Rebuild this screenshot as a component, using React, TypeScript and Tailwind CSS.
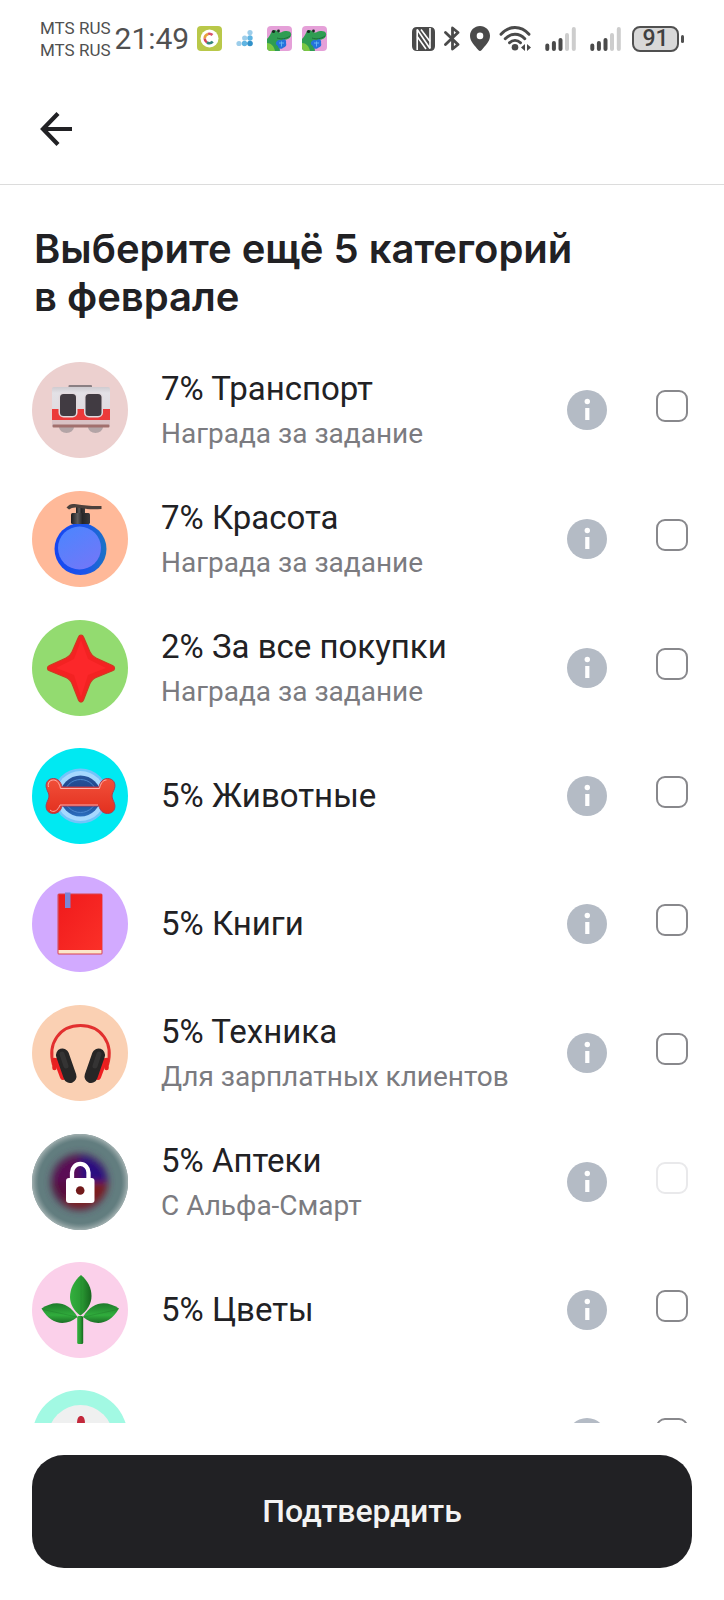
import type { ReactNode } from "react";

type Category = {
  id: string;
  title?: string;
  note?: string;
  locked?: boolean;
  icon: ReactNode;
};

function Disc({ color, children }: { color: string; children: ReactNode }) {
  return (
    <svg viewBox="0 0 96 96" className="size-24 shrink-0" aria-hidden="true">
      <circle cx="48" cy="48" r="48" fill={color} />
      {children}
    </svg>
  );
}

const Train = (
  <Disc color="#ecd0cf">
    <defs>
      <linearGradient id="tr" x1="0" y1="0" x2="0" y2="1">
        <stop offset="0" stopColor="#cfcbd0" />
        <stop offset=".15" stopColor="#e3e1e6" />
        <stop offset="1" stopColor="#dcd6da" />
      </linearGradient>
    </defs>
    <rect x="36.5" y="23" width="23.5" height="3" rx="1" fill="#8b7f83" />
    <path d="M27 65h15a7.5 6 0 0 1-15 0zM56 65h15a7.5 6 0 0 1-15 0z" fill="#b3a4a6" />
    <rect x="20" y="25" width="58" height="40" rx="2" fill="url(#tr)" />
    <rect x="20" y="47" width="58" height="11" fill="#ec3a3a" />
    <rect x="20" y="58" width="58" height="5" fill="#d9c2c5" />
    <rect x="20.5" y="62.5" width="57" height="3" rx="1" fill="#a2706e" />
    <rect x="26.5" y="30.5" width="19" height="25" rx="5" fill="#e2dade" />
    <rect x="52" y="30.5" width="19" height="25" rx="5" fill="#e2dade" />
    <rect x="28" y="32" width="16" height="22" rx="3.5" fill="#413b42" />
    <rect x="53.5" y="32" width="16" height="22" rx="3.5" fill="#413b42" />
  </Disc>
);

const Bottle = (
  <Disc color="#ffb999">
    <defs>
      <linearGradient id="bo" x1="0" y1="0" x2="1" y2="0">
        <stop offset="0" stopColor="#1546f2" />
        <stop offset=".6" stopColor="#1c55ea" />
        <stop offset="1" stopColor="#1b74c4" />
      </linearGradient>
      <linearGradient id="bi" x1="0" y1="0" x2=".6" y2="1">
        <stop offset="0" stopColor="#4a86ff" />
        <stop offset="1" stopColor="#6f78f8" />
      </linearGradient>
      <linearGradient id="bc" x1="0" y1="0" x2="1" y2="0">
        <stop offset="0" stopColor="#1c1c1e" />
        <stop offset=".35" stopColor="#5d5b5c" />
        <stop offset=".6" stopColor="#262627" />
        <stop offset="1" stopColor="#3b3a3b" />
      </linearGradient>
    </defs>
    <path d="M41 31h16v5H41z" fill="#2a59d2" />
    <circle cx="48.5" cy="58" r="26" fill="url(#bo)" />
    <circle cx="47.5" cy="57" r="21.5" fill="url(#bi)" />
    <rect x="44" y="15" width="9" height="9" fill="url(#bc)" />
    <rect x="39" y="22" width="19" height="11" rx="1.5" fill="url(#bc)" />
    <path d="M34.500 16.500c3-4 6-4 10-3.200 8 1.400 17 2 25 1.700v3c-9 .8-17 0-24-1.200-4-.7-6 .5-8.500 1.700z" fill="#4b403c" />
  </Disc>
);

const Star = (
  <Disc color="#93db70">
    <path
      d="M46.500 17c1-2.700 4-2.700 5 0l6.500 15c1.300 3 3 4.700 6 6l16.500 7.500c2.700 1.200 2.700 4.200 0 5.300L64 57.500c-3.500 1.500-5 3.500-6.300 6.500l-6.200 16c-1 2.700-4 2.700-5 0l-6.300-16c-1.300-3-2.700-5-6.200-6.500l-16.500-6.700c-2.700-1.100-2.700-4.100 0-5.300L34 38c3-1.300 4.700-3 6-6z"
      fill="#f32222"
      stroke="#cf3a20"
      strokeWidth="1.2"
    />
    <path d="M49 20l7 19 18 9-18 7-7 22-7-22-18-7 18-9z" fill="#ff2a2e" opacity=".7" />
  </Disc>
);

const Bone = (
  <Disc color="#00e9f2">
    <defs>
      <linearGradient id="bn" x1="0" y1="0" x2="0" y2="1">
        <stop offset="0" stopColor="#27579f" />
        <stop offset=".5" stopColor="#1a3c80" />
        <stop offset="1" stopColor="#2b6fc0" />
      </linearGradient>
      <linearGradient id="bb" x1="0" y1="0" x2="0" y2="1">
        <stop offset="0" stopColor="#f1503a" />
        <stop offset="1" stopColor="#e3301f" />
      </linearGradient>
    </defs>
    <circle cx="48.5" cy="48" r="27.5" fill="#72c4fa" />
    <circle cx="48.5" cy="48" r="25" fill="#a5d8ff" />
    <circle cx="48.5" cy="48" r="20.5" fill="url(#bn)" />
    <circle cx="48.5" cy="48" r="16.5" fill="none" stroke="#4a86cf" strokeWidth="1" />
    <path
      d="M30 39h37c1-5 4-8.500 8.500-8.500 6 0 8.500 5 7 10-.8 2.600-2.500 5-2.500 7.500s1.700 5 2.500 7.500c1.500 5-1 10-7 10-4.500 0-7.500-3-8.500-7.500H30c-1 4.500-4 7.500-8.500 7.500-6 0-8.500-5-7-10 .8-2.500 2.500-5 2.500-7.500s-1.700-4.900-2.500-7.500c-1.500-5 1-10 7-10 4.500 0 7.500 3.500 8.500 8.500z"
      fill="url(#bb)"
      stroke="#a93a55"
      strokeWidth="1"
    />
    <path d="M16.500 39c-1-4 1-7 5-7s6 4 7 8.500h39c1-4.500 3-8.500 7-8.500" fill="none" stroke="#ffb0a8" strokeWidth="1" />
    <path d="M18 62c3 3 8 1 10-5h38" fill="none" stroke="#f9a8a8" strokeWidth="1" />
  </Disc>
);

const Book = (
  <Disc color="#d2aaff">
    <defs>
      <linearGradient id="bk" x1="0" y1="0" x2="1" y2="1">
        <stop offset="0" stopColor="#f01a1c" />
        <stop offset="1" stopColor="#fb3028" />
      </linearGradient>
    </defs>
    <rect x="25.5" y="17.5" width="45" height="61" rx="1.5" fill="#d9434f" />
    <rect x="27" y="18.5" width="43" height="56" fill="url(#bk)" />
    <rect x="26.5" y="74" width="43" height="3.5" fill="#fde6c8" />
    <rect x="33" y="16.5" width="5.5" height="15.5" fill="#7d86d6" />
  </Disc>
);

const Headphones = (
  <Disc color="#fad0b3">
    <path d="M25 56l6 16M72 56l-6 16" stroke="#ee1f22" strokeWidth="6" strokeLinecap="round" />
    <path d="M21.500 60C15 38 28 20.500 48.500 20.500S82 38 75.500 60" fill="none" stroke="#e2302f" strokeWidth="3" />
    <path d="M22.500 55v8M74.500 55v8" stroke="#e8201f" strokeWidth="4.5" strokeLinecap="round" />
    <path d="M30.500 50l7.500 21.500M66.500 50L59 71.500" stroke="#272626" strokeWidth="13" strokeLinecap="round" />
    <path d="M30 49l4 12M67 49l-4 12" stroke="#353434" strokeWidth="5" strokeLinecap="round" />
  </Disc>
);

const Lock = (
  <Disc color="#627d7f">
    <defs>
      <radialGradient id="lr">
        <stop offset=".86" stopColor="#8a9c9d" stopOpacity="0" />
        <stop offset="1" stopColor="#a3b1b1" />
      </radialGradient>
      <filter id="lb" x="-30%" y="-30%" width="160%" height="160%">
        <feGaussianBlur stdDeviation="3.5" />
      </filter>
    </defs>
    <circle cx="48" cy="48" r="48" fill="url(#lr)" />
    <g filter="url(#lb)">
      <circle cx="47.5" cy="48" r="29" fill="#4f3452" />
      <path d="M48 50H21a27 27 0 0 1 27-28z" fill="#5a0b55" />
      <path d="M48 50V22a27 27 0 0 1 27 26z" fill="#2b1180" />
      <path d="M48 48h27a27 27 0 0 1-45 19z" fill="#7c1f1c" />
      <path d="M48 48L32 68a27 27 0 0 1-11-20z" fill="#59103f" />
    </g>
    <path d="M40 46v-7.500a8.200 8.500 0 0 1 16.500 0V46" fill="none" stroke="#fff" strokeWidth="4.3" />
    <rect x="34" y="44" width="28.5" height="25" rx="3" fill="#fff" />
    <circle cx="48.2" cy="56.5" r="4.3" fill="#721a1b" />
  </Disc>
);

const Plant = (
  <Disc color="#fbd0ea">
    <defs>
      <linearGradient id="pl" x1="0" y1="0" x2="1" y2="0">
        <stop offset="0" stopColor="#33b03e" />
        <stop offset=".5" stopColor="#2b9c34" />
        <stop offset="1" stopColor="#17661f" />
      </linearGradient>
      <linearGradient id="pm" x1="0" y1="0" x2="0" y2="1">
        <stop offset="0" stopColor="#1f7a2c" />
        <stop offset=".6" stopColor="#30ad3c" />
        <stop offset="1" stopColor="#1c6f26" />
      </linearGradient>
    </defs>
    <rect x="45.2" y="54" width="6" height="28" rx="1.5" fill="url(#pl)" />
    <path d="M49 13c-7 6-11 14-11 22 0 7 4 14 10.300 18.500C55 49 59.500 42 59.500 34 59.500 26 56 19 49 13z" fill="url(#pl)" />
    <path d="M9.500 46.500c12-8 26-8 36 8.500-11 9-26 9-36-8.500z" fill="url(#pm)" />
    <path d="M87 46.500c-12-8-26-8-36 8.500 11 9 26 9 36-8.500z" fill="url(#pm)" />
    <path d="M49 15v38M11 47.500l34 7.500M85.500 47.500L51.500 55" stroke="#1e7429" strokeWidth=".6" opacity=".6" />
  </Disc>
);

const Dial = (
  <Disc color="#a2f9e3">
    <circle cx="48.5" cy="47.5" r="32.5" fill="#eff0f0" />
    <path d="M49 26c2.800 0 4 3 4 8v14h-8V34c0-5 1.200-8 4-8z" fill="#c3283b" />
  </Disc>
);

const categories: Category[] = [
  { id: "transport", title: "7% Транспорт", note: "Награда за задание", icon: Train },
  { id: "beauty", title: "7% Красота", note: "Награда за задание", icon: Bottle },
  { id: "all", title: "2% За все покупки", note: "Награда за задание", icon: Star },
  { id: "pets", title: "5% Животные", icon: Bone },
  { id: "books", title: "5% Книги", icon: Book },
  { id: "tech", title: "5% Техника", note: "Для зарплатных клиентов", icon: Headphones },
  { id: "pharmacy", title: "5% Аптеки", note: "С Альфа-Смарт", locked: true, icon: Lock },
  { id: "flowers", title: "5% Цветы", icon: Plant },
  { id: "more", icon: Dial },
];

function CategoryRow({ item }: { item: Category }) {
  return (
    <li className="flex items-center py-4">
      {item.icon}
      <label htmlFor={item.id} className="ml-[33px] flex min-w-0 flex-1 flex-col">
        <span className={item.note ? "pt-[6px] text-[33px] leading-[44px]" : "text-[33px] leading-[44px]"}>
          {item.title}
        </span>
        {item.note && <span className="pb-px text-[28px] leading-[46px] text-[#7b7b80]">{item.note}</span>}
      </label>
      <button type="button" aria-label="Информация" className="size-10 shrink-0">
        <svg viewBox="0 0 40 40" className="size-10">
          <circle cx="20" cy="20" r="20" fill="#b4bbc5" />
          <circle cx="20.3" cy="11.5" r="2.7" fill="#fff" />
          <path d="M18.200 18h4.200v12h-4.200z" fill="#fff" />
        </svg>
      </button>
      <input
        id={item.id}
        type="checkbox"
        disabled={item.locked}
        className="mr-1 mb-2 ml-[49px] size-8 shrink-0 appearance-none rounded-[9px] border-2 border-[#88888c] bg-white checked:bg-[#212124] disabled:border-[#e9e9eb]"
      />
    </li>
  );
}

function Croc() {
  return (
    <svg viewBox="0 0 25 25" className="w-[25px]" aria-hidden="true">
      <defs>
        <clipPath id="cr">
          <rect width="25" height="25" rx="4" />
        </clipPath>
      </defs>
      <g clipPath="url(#cr)">
        <rect width="25" height="25" fill="#e5a0d8" />
        <path d="M0 13c2-2 3-4 4-6 1-3 4-4 6-2 1 1 2 1.500 4 1.500 4-2 9-2 10 1 1 4-3 6-7 6.500l-5 1.500 1 10H0z" fill="#2f9d52" />
        <path d="M0 17c4 0 7 3 8 8H0z" fill="#7cc843" />
        <path d="M10 12c4 1.500 9 1 13-2" stroke="#1f6d3c" strokeWidth="1" fill="none" />
        <circle cx="6.5" cy="5.5" r="1.6" fill="#182a20" />
        <circle cx="11.5" cy="5" r="1.4" fill="#182a20" />
        <path d="M10 15c2-2 4 0 5-1 2-2 5 0 4 3 1 3-1 4-3 5-3 2-5 0-5-2-2-1-3-3-1-5z" fill="#2472dc" />
        <path d="M12 17h5M14.500 15.500v5" stroke="#63b4f2" strokeWidth="1" fill="none" />
      </g>
    </svg>
  );
}

function Signal() {
  return (
    <svg viewBox="0 0 31 25" className="ml-[5px] w-[31px]" aria-hidden="true">
      <g strokeWidth="4" strokeLinecap="round" stroke="#4a4a4a">
        <path d="M2.300 19.500V23M8.900 17v6M15.500 14v9" />
        <path d="M22 9v14M28.800 3v20" stroke="#cdcdcd" />
      </g>
    </svg>
  );
}

function StatusBar() {
  return (
    <div className="flex h-[77px] shrink-0 items-center justify-between pr-10 pl-10 text-[#505050]">
      <div className="flex items-center">
        <div className="text-[17px] leading-[22px]">
          <p>MTS RUS</p>
          <p>MTS RUS</p>
        </div>
        <span className="ml-1 text-[30px] leading-[40px]">21:49</span>
        <div className="ml-2 flex items-center gap-[10px]">
          <svg viewBox="0 0 25 25" className="w-[25px]" aria-hidden="true">
            <rect width="25" height="25" rx="4" fill="#b9c849" />
            <circle cx="12.5" cy="12.5" r="9" fill="#fff" />
            <g fill="none" strokeWidth="2.6">
              <path d="M15.500 9A4.800 4.800 0 0 0 11 7.900" stroke="#d9536a" />
              <path d="M11 7.900a4.800 4.800 0 0 0-3.300 4.600" stroke="#e8a13c" />
              <path d="M7.700 12.500a4.800 4.800 0 0 0 2.300 4" stroke="#d34559" />
              <path d="M10 16.500a4.800 4.800 0 0 0 5.800-.8" stroke="#35857a" />
            </g>
          </svg>
          <svg viewBox="0 0 25 25" className="w-[25px]" aria-hidden="true">
            <g fill="#9ccdea">
              <circle cx="18" cy="6.5" r="2.6" />
              <circle cx="12.7" cy="12" r="2.6" />
              <circle cx="7" cy="17.5" r="2.6" />
            </g>
            <g fill="#5fb4e2">
              <circle cx="18" cy="12" r="2.7" />
              <circle cx="12.5" cy="17.5" r="2.7" />
            </g>
            <circle cx="18" cy="17.5" r="2.8" fill="#3191c9" />
          </svg>
          <Croc />
          <Croc />
        </div>
      </div>
      <div className="flex items-center gap-[9px]">
        <svg viewBox="0 0 23 24" className="w-[23px]" aria-hidden="true">
          <path d="M5 0h13q5 0 5 5v14q0 5-5 5H5q-5 0-5-5V5q0-5 5-5z" fill="#4a4a4a" />
          <path d="M5.200 2.500v20.500M18 1v20.500" stroke="#fff" strokeWidth="1.6" />
          <path d="M5.200 2.500L18 21.500M9 2.500l9 12M5.200 9.500L14 22" stroke="#fff" strokeWidth="1.6" fill="none" />
        </svg>
        <svg viewBox="0 0 17 25" className="w-[17px]" aria-hidden="true">
          <path d="M1.500 6.500l12.500 12-5.500 4.500V2L14 6.500l-12.500 12" fill="none" stroke="#4a4a4a" strokeWidth="2.8" strokeLinejoin="round" strokeLinecap="round" />
        </svg>
        <svg viewBox="0 0 20 25" className="w-[20px]" aria-hidden="true">
          <path d="M10 0c5.500 0 10 4.300 10 9.800 0 6-5 10-8.300 14.200q-1.700 2-3.400 0C5 19.800 0 15.800 0 9.800 0 4.300 4.500 0 10 0zm0 6.600a3.300 3.300 0 1 0 0 6.600 3.300 3.300 0 0 0 0-6.600z" fill="#4a4a4a" />
        </svg>
        <svg viewBox="0 0 32 25" className="w-[32px]" aria-hidden="true">
          <g fill="none" stroke="#4a4a4a" strokeWidth="2.9" strokeLinecap="round">
            <path d="M2 8.300C10-.8 22-.8 30 8.300" />
            <path d="M6.200 12.800c5.500-6 14.100-6 19.600 0" />
            <path d="M10.500 16.800c3.200-3.200 7.800-3.200 11 0" />
          </g>
          <circle cx="16" cy="21.3" r="3.3" fill="#4a4a4a" />
          <path d="M22 21.500l4-3.500v7zM32 21.500L28 18v7z" fill="#4a4a4a" />
        </svg>
        <Signal />
        <Signal />
        <div className="ml-[2px] flex items-center gap-[2px]">
          <span className="flex h-[26px] w-[47px] items-center justify-center rounded-lg border-2 border-[#505050] bg-[#d8d8d8] text-[23px] leading-[22px] font-medium text-[#404040]">
            91
          </span>
          <span className="h-2 w-[3px] rounded-sm bg-[#505050]" />
        </div>
      </div>
    </div>
  );
}

export default function App() {
  return (
    <div className="flex h-screen flex-col bg-white font-[Roboto,'Noto_Sans',sans-serif] text-[#212124]">
      <StatusBar />
      <header className="flex h-[108px] shrink-0 items-center border-b border-[#dcdcdc] px-8">
        <button type="button" aria-label="Назад" className="-mt-1 flex size-12 items-center justify-center">
          <svg viewBox="0 0 48 48" className="size-12" fill="none" stroke="#212124" strokeWidth="4.2">
            <path d="M26 8.500L11 24l15 15.500M11 24h29" />
          </svg>
        </button>
      </header>
      <main className="min-h-0 flex-1 overflow-y-auto px-8 pt-10 [scrollbar-width:none]">
        <h1 className="mb-6 ml-[2px] font-[Inter,sans-serif] text-[40px] leading-[48px] font-semibold">
          Выберите ещё 5 категорий
          <br />в феврале
        </h1>
        <ul>
          {categories.map((item) => (
            <CategoryRow key={item.id} item={item} />
          ))}
        </ul>
      </main>
      <footer className="shrink-0 p-8">
        <button type="button" className="w-full rounded-[32px] bg-[#212124] py-8 text-[32px] leading-[49px] font-medium text-[#f3f3f3]">
          Подтвердить
        </button>
      </footer>
    </div>
  );
}
